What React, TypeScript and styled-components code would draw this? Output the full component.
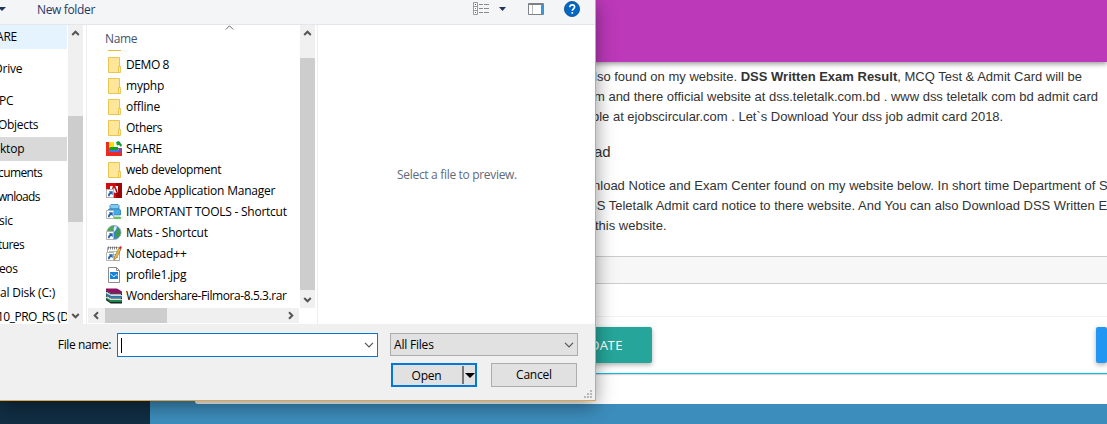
import React from "react";
import styled, { createGlobalStyle } from "styled-components";

const GlobalStyle = createGlobalStyle`
  * { box-sizing: border-box; }
  body { margin: 0; overflow: hidden; background: #3c8dbc; }
`;

const ui = `"Open Sans", "Noto Sans", sans-serif`;

const Page = styled.div`
  position: relative;
  display: flex;
  width: 1107px;
  height: 424px;
  overflow: hidden;
  background: #3c8dbc;
`;
const Sidebar = styled.aside`
  width: 150px;
  background: #112e43;
`;
const Main = styled.main`
  flex: 1;
  min-width: 0;
  padding-left: 45px;
`;
const Card = styled.section`
  display: flex;
  flex-direction: column;
  height: 404px;
  overflow: hidden;
  background: #fff;
  border-bottom-left-radius: 3px;
`;
const PurpleBar = styled.header`
  flex: none;
  height: 62px;
  background: #bc39b9;
  box-shadow: 0 2px 5px rgba(0, 0, 0, 0.4);
`;
const Article = styled.div`
  flex: none;
  height: 194px;
  padding: 5px 0 0 385px;
  font-family: "Liberation Sans", Arial, sans-serif;
  font-size: 13px;
  line-height: 20px;
  color: #333;
`;
const Line = styled.div<{ $shift: number; $spacing?: number }>`
  margin-left: ${(p) => p.$shift}px;
  letter-spacing: ${(p) => p.$spacing ?? 0}px;
  white-space: nowrap;
`;
const Heading = styled.div`
  margin: 14px 0 13px;
  padding-left: 14px;
  font-size: 15px;
  line-height: 22px;
`;
const EditorStatus = styled.div`
  flex: none;
  height: 28px;
  border: solid #ccc;
  border-width: 1px 0;
  background: #f7f7f7;
`;
const Actions = styled.div`
  display: flex;
  justify-content: space-between;
  flex: none;
  height: 58px;
  margin-top: 32px;
  padding: 10px 0 0 350px;
  border-top: 1px solid #f2f2f2;
  border-bottom: 1px solid #00c0ef;
  box-shadow: 0 1px 1px rgba(0, 0, 0, 0.15);
`;
const ActionButton = styled.button<{ $color: string; $width: number; $pad: number }>`
  flex: none;
  width: ${(p) => p.$width}px;
  height: 36px;
  padding: 0 ${(p) => p.$pad}px 0 0;
  border: 0;
  border-radius: 2px;
  background: ${(p) => p.$color};
  box-shadow: 0 2px 5px rgba(0, 0, 0, 0.3);
  color: #fff;
  font: 13px/36px "Noto Sans", sans-serif;
  letter-spacing: 0.5px;
  text-align: right;
`;

const Dialog = styled.div`
  position: absolute;
  left: 0;
  top: 0;
  display: flex;
  flex-direction: column;
  width: 596px;
  height: 401px;
  border: solid #dba64c;
  border-width: 0 1px 1px 0;
  background: #fff;
  box-shadow: 0 5px 18px rgba(0, 0, 0, 0.42);
  font-family: ${ui};
  font-size: 12px;
  color: #000;
`;
const Text = styled.span<{ $s?: number }>`
  letter-spacing: ${(p) => p.$s ?? -0.2}px;
  white-space: nowrap;
`;
const Toolbar = styled.div`
  display: flex;
  flex: none;
  height: 25px;
  padding-right: 15px;
  border-bottom: 1px solid #e3e6ea;
  background: #f4f5f7;
  color: #1e3a66;
  line-height: 19px;
  svg { flex: none; }
`;
const NewFolder = styled.div`
  flex: 1;
  padding-left: 30px;
`;
const Body = styled.div`
  display: flex;
  flex: none;
  height: 299px;
`;
const Nav = styled.div`
  width: 67px;
  margin-right: 1px;
  overflow: hidden;
`;
const NavItem = styled.div<{ $shift: number; $gap?: number; $bg?: string }>`
  height: 24px;
  margin-bottom: ${(p) => p.$gap ?? 0}px;
  text-indent: ${(p) => p.$shift}px;
  line-height: 24px;
  background: ${(p) => p.$bg ?? "transparent"};
`;
const Scroll = styled.div<{ $height: number }>`
  flex: none;
  display: flex;
  flex-direction: column;
  width: 15px;
  height: ${(p) => p.$height}px;
  background: #f0f0f0;
  > :last-child { margin-top: auto; }
`;
const Thumb = styled.div<{ $h: number; $top: number }>`
  height: ${(p) => p.$h}px;
  margin-top: ${(p) => p.$top}px;
  background: #cdcdcd;
`;
const ArrowCell = styled.div<{ $wide?: boolean }>`
  display: flex;
  align-items: center;
  justify-content: center;
  flex: none;
  width: ${(p) => (p.$wide ? 17 : 15)}px;
  height: 17px;
`;
const Files = styled.div`
  display: flex;
  flex-direction: column;
  width: 231px;
  margin-left: 3px;
  padding-left: 1px;
  border-left: 1px solid #eee;
`;
const FilesTop = styled.div`
  display: flex;
  height: 283px;
`;
const FileList = styled.div`
  width: 212px;
  padding-left: 17px;
`;
const ColumnHead = styled.div`
  display: flex;
  height: 24px;
  line-height: 27px;
  color: #44546f;
  svg { margin-left: 88px; }
`;
const Sliver = styled.div`
  width: 13px;
  height: 1px;
  margin: 1px 0 3px 3px;
  background: #e5bd38;
`;
const FileRow = styled.div`
  display: flex;
  align-items: center;
  gap: 4px;
  height: 21px;
  padding-left: 1px;
  svg { flex: none; }
`;
const HScroll = styled.div`
  display: flex;
  align-items: center;
  width: 211px;
  height: 15px;
  background: #f0f0f0;
`;
const HThumb = styled.div`
  width: 62px;
  height: 15px;
  margin-right: 115px;
  background: #cdcdcd;
`;
const Preview = styled.div`
  display: flex;
  align-items: center;
  justify-content: center;
  flex: 1;
  padding-left: 1px;
  border-left: 1px solid #eee;
  color: #616b78;
`;
const Footer = styled.div`
  display: flex;
  flex-direction: column;
  gap: 6px;
  flex: 1;
  padding: 9px 17px 0 0;
  background: #f0f0f0;
`;
const FooterRow = styled.div`
  display: flex;
  justify-content: flex-end;
  align-items: flex-start;
`;
const FileLabel = styled.label`
  margin-right: 6px;
  line-height: 24px;
`;
const FileInput = styled.div`
  display: flex;
  align-items: center;
  justify-content: space-between;
  width: 261px;
  height: 24px;
  margin-right: 12px;
  padding: 0 3px;
  border: 1px solid #0078d7;
  background: #fff;
`;
const Caret = styled.i`
  width: 1px;
  height: 15px;
  background: #000;
`;
const Select = styled.div`
  display: flex;
  align-items: center;
  justify-content: space-between;
  width: 188px;
  height: 23px;
  padding: 0 3px;
  border: 1px solid #adadad;
  background: #e1e1e1;
`;
const OpenButton = styled.div`
  display: flex;
  align-items: center;
  width: 86px;
  height: 24px;
  margin-right: 14px;
  border: 2px solid #0078d7;
  background: #e1e1e1;
  span { flex: 1; padding-right: 2px; text-align: center; }
`;
const Split = styled.div`
  display: flex;
  align-items: center;
  justify-content: flex-end;
  width: 13px;
  height: 18px;
  border-left: 2px solid #777;
`;
const CancelButton = styled.div`
  width: 86px;
  height: 24px;
  margin-right: 1px;
  border: 1px solid #adadad;
  background: #e1e1e1;
  line-height: 22px;
  text-align: center;
`;
const Grip = styled.svg`
  position: absolute;
  right: 3px;
  bottom: 2px;
`;

const rotation = { up: 0, right: 90, down: 180, left: 270 };
const Arrow = ({ dir }: { dir: keyof typeof rotation }) => (
  <ArrowCell $wide={dir === "left" || dir === "right"}>
    <svg width="9" height="9" viewBox="0 0 9 9">
      <path d="M1.2 6 4.5 2.7 7.8 6" fill="none" stroke="#555" strokeWidth="2" transform={`rotate(${rotation[dir]} 4.5 4.5)`} />
    </svg>
  </ArrowCell>
);
const Chevron = () => (
  <svg width="10" height="6" viewBox="0 0 10 6">
    <path d="M1 .8 5 4.8 9 .8" fill="none" stroke="#555" strokeWidth="1.2" />
  </svg>
);

const ShortcutMark = () => (
  <g>
    <path d="M.5 6.5h7v8h-7z" fill="#fff" stroke="#b5b5b5" />
    <path d="M2 13.2c0-2.2.6-3.2 1.8-3.7L2.9 8.3h3.8v3.9l-1.2-1.1c-1.2.3-1.8 1-1.8 2.1z" fill="#2363ae" />
  </g>
);

type Kind = "folder" | "share" | "adobe" | "tools" | "globe" | "notepad" | "image" | "rar";
const FileIcon = ({ kind }: { kind: Kind }) => (
  <svg width="16" height="16" viewBox="0 0 16 16">
    {kind === "folder" && (
      <g>
        <path d="M2.5.5h11v15h-11z" fill="#ffe699" stroke="#eac54f" />
        <path d="M12.5 15.5v-6h2v6z" fill="#ffeaa4" stroke="#e8bd3c" strokeWidth=".8" />
      </g>
    )}
    {kind === "share" && (
      <g>
        <path d="M0 1h3v9h13v5H0z" fill="#ec2b20" />
        <path d="M3 1h5v5H3z" fill="#ffe000" />
        <path d="M4 6h8v4H3V7z" fill="#12a51c" />
        <path d="M3 9h10v2H3z" fill="#3a7ced" />
        <path d="M12 7h4v5h-3z" fill="#8b4b9d" />
        <path d="m10 1 3-1 3 4-1 2-2-2-2 .5z" fill="#1d9b32" />
      </g>
    )}
    {kind === "adobe" && (
      <g>
        <path d="M0 0h16v15H0z" fill="#d20d10" />
        <path d="M10 0h6v15h-6z" fill="#9d0609" />
        <path d="M4 9V3h2.8L5.3 9zM9.4 3H12v7zM8 4.5l2.6 5.5H8.8L8 8.6H6.6z" fill="#fff" />
        <ShortcutMark />
      </g>
    )}
    {kind === "tools" && (
      <g>
        <path d="M4 1.5 5 .5h7l1 1V5H4z" fill="#7fcbf3" stroke="#3487b8" strokeWidth=".8" />
        <path d="M2 6 3.5 5H13l1.5 1v5H2z" fill="#45aaea" stroke="#2d7caf" strokeWidth=".8" />
        <path d="M8 11.5h6V13H8z" fill="#cfd8dc" />
        <path d="M8 13h7v2H8z" fill="#62c65c" />
        <ShortcutMark />
      </g>
    )}
    {kind === "globe" && (
      <g>
        <circle cx="8" cy="7.5" r="7" fill="#3a86bd" stroke="#8fb0c4" />
        <path d="M2 4 5 1.5l3 .3L7 5 4 7H1.5z" fill="#4da950" />
        <path d="m11 2.5 3 2.5.5 4-3 4-2-3 1.3-4z" fill="#3d9b3e" />
        <path d="m8.5 1 2.5.8-1 3L8 7 7.5 4z" fill="#dbeff8" />
        <ShortcutMark />
      </g>
    )}
    {kind === "notepad" && (
      <g>
        <path d="M1.5 1.5h12v13h-12z" fill="#fff" stroke="#aaa" />
        <path d="M2.5.5v3M4.5.5v3M6.5.5v3M8.5.5v3M10.5.5v3" stroke="#666" strokeWidth=".8" />
        <path d="M3 5.5h8M8 8.5h3M8 11.5h4" stroke="#a6c5b0" />
        <path d="m13 2 2 1-4.5 9-2.5 2 .3-3z" fill="#f4bd35" stroke="#85602b" strokeWidth=".6" />
        <path d="m14 0 2 1-1 2.3-2-1z" fill="#cf3535" />
        <ShortcutMark />
      </g>
    )}
    {kind === "image" && (
      <g>
        <path d="M2.5.5h8l3 3v12h-11z" fill="#fff" stroke="#8b8b8b" />
        <path d="M10.5.5v3h3" fill="none" stroke="#8b8b8b" />
        <path d="M4 5h8v7H4z" fill="#1683d8" />
        <path d="m4.5 7 2 1.5L8 10l2-2.5 1.5 1" fill="none" stroke="#fff" strokeWidth=".8" />
      </g>
    )}
    {kind === "rar" && (
      <g>
        <path d="M0 .5h11l5 3v1.7H5L0 2.5z" fill="#8d1263" />
        <path d="M0 2.5 5 5.2h11V7H5L0 4z" fill="#241c20" />
        <path d="m1 4 4 2.2h10v.9H5L1 5z" fill="#f1e6ea" />
        <path d="m0 5 5 2.7h11v2H5L0 7z" fill="#217bb0" />
        <path d="m0 7 5 2.7h11v1.6H5L0 8.6z" fill="#1b2226" />
        <path d="m1 8.3 4 2.2h10v.9H5L1 9.3z" fill="#e8f1f4" />
        <path d="m0 9.5 5 2.6h11v2H5l-5-2.8z" fill="#17894b" />
        <path d="m0 11.5 5 3.3h11" fill="none" stroke="#16251c" strokeWidth="1.4" />
      </g>
    )}
  </svg>
);

const files: { name: string; kind: Kind; s?: number }[] = [
  { name: "DEMO 8", kind: "folder", s: -0.4 },
  { name: "myphp", kind: "folder" },
  { name: "offline", kind: "folder" },
  { name: "Others", kind: "folder", s: -0.35 },
  { name: "SHARE", kind: "share" },
  { name: "web development", kind: "folder", s: -0.35 },
  { name: "Adobe Application Manager", kind: "adobe", s: -0.22 },
  { name: "IMPORTANT TOOLS - Shortcut", kind: "tools", s: -0.24 },
  { name: "Mats - Shortcut", kind: "globe", s: -0.24 },
  { name: "Notepad++", kind: "notepad" },
  { name: "profile1.jpg", kind: "image", s: -0.25 },
  { name: "Wondershare-Filmora-8.5.3.rar", kind: "rar", s: -0.41 },
];

const places: { name: string; shift: number; gap?: number; bg?: string; s?: number }[] = [
  { name: "ARE", shift: -4, gap: 8, bg: "#e5f3ff" },
  { name: "Drive", shift: -6, gap: 8 },
  { name: "PC", shift: -1 },
  { name: "Objects", shift: -2, s: -0.3 },
  { name: "ktop", shift: 0, bg: "#d9d9d9" },
  { name: "cuments", shift: -2, s: -0.6 },
  { name: "wnloads", shift: -2, s: -0.7 },
  { name: "sic", shift: -1 },
  { name: "tures", shift: -2, s: -0.6 },
  { name: "eos", shift: -1, s: -0.4 },
  { name: "al Disk (C:)", shift: 0 },
  { name: "10_PRO_RS (D:)", shift: -3, s: -0.5 },
];

const ToolbarIcons = () => (
  <svg width="110" height="24" viewBox="0 0 110 24">
    <path d="M3.5 2.5h4v12h-4zM3.5 6.5h4M3.5 10.5h4" fill="#fff" stroke="#999" />
    <path d="M9 4.5h4M14 4.5h5M9 8.5h4M14 8.5h5M9 12.5h4M14 12.5h5" stroke="#8a8a8a" />
    <path d="M5 4h1v1H5z" fill="#555" />
    <path d="M5 8h1v1H5z" fill="#2d8ded" />
    <path d="M5 12h1v1H5z" fill="#d33" />
    <path d="M29 7h7l-3.5 4z" fill="#1f355e" />
    <path d="M58.5 3.5h15v11h-15z" fill="#fff" stroke="#7d8186" />
    <path d="M58 4.5h16" stroke="#7d8186" />
    <path d="M62.5 5v9" stroke="#bbb" />
    <path d="M71 5h2v9h-2z" fill="#3697e1" />
    <circle cx="102" cy="9" r="7.6" fill="#0067c5" stroke="#174e84" strokeWidth=".8" />
    <path d="M99.8 7.3c0-3.4 4.8-3 4.8-.3 0 1.8-2.3 1.8-2.3 3.8M102.3 12v1.7" fill="none" stroke="#fff" strokeWidth="1.6" />
  </svg>
);

export default function App() {
  return (
    <Page>
      <GlobalStyle />
      <Sidebar />
      <Main>
        <Card>
          <PurpleBar />
          <Article>
            <Line $shift={14}>lso found on my website. <b>DSS Written Exam Result</b>, MCQ Test &amp; Admit Card will be</Line>
            <Line $shift={14} $spacing={-0.01}>m and there official website at dss.teletalk.com.bd . www dss teletalk com bd admit card</Line>
            <Line $shift={12} $spacing={-0.01}>ble at ejobscircular.com . Let`s Download Your dss job admit card 2018.</Line>
            <Heading>ad</Heading>
            <Line $shift={13} $spacing={0.01}>nload Notice and Exam Center found on my website below. In short time Department of Social</Line>
            <Line $shift={8}>SS Teletalk Admit card notice to there website. And You can also Download DSS Written Exam</Line>
            <Line $shift={15}>this website.</Line>
          </Article>
          <EditorStatus />
          <Actions>
            <ActionButton $color="#26a69a" $width={107} $pad={29}>UPDATE</ActionButton>
            <ActionButton $color="#2196f3" $width={11} $pad={0} />
          </Actions>
        </Card>
      </Main>

      <Dialog>
        <Toolbar>
          <svg width="7" height="24"><path d="M-2 7h8L2 11z" fill="#1f355e" /></svg>
          <NewFolder><Text $s={-0.35}>New folder</Text></NewFolder>
          <ToolbarIcons />
        </Toolbar>
        <Body>
          <Nav>
            {places.map((p) => (
              <NavItem key={p.name} $shift={p.shift} $gap={p.gap} $bg={p.bg}><Text $s={p.s}>{p.name}</Text></NavItem>
            ))}
          </Nav>
          <Scroll $height={299}>
            <Arrow dir="up" />
            <Thumb $h={106} $top={74} />
            <Arrow dir="down" />
          </Scroll>
          <Files>
            <FilesTop>
              <FileList>
                <ColumnHead>
                  <Text $s={-0.35}>Name</Text>
                  <svg width="9" height="6"><path d="M.8 4.5 4.5.8 8.2 4.5" fill="none" stroke="#666" /></svg>
                </ColumnHead>
                <Sliver />
                {files.map((f) => (
                  <FileRow key={f.name}><FileIcon kind={f.kind} /><Text $s={f.s}>{f.name}</Text></FileRow>
                ))}
              </FileList>
              <Scroll $height={283}>
                <Arrow dir="up" />
                <Thumb $h={232} $top={16} />
                <Arrow dir="down" />
              </Scroll>
            </FilesTop>
            <HScroll>
              <Arrow dir="left" />
              <HThumb />
              <Arrow dir="right" />
            </HScroll>
          </Files>
          <Preview><Text $s={-0.32}>Select a file to preview.</Text></Preview>
        </Body>
        <Footer>
          <FooterRow>
            <FileLabel><Text $s={-0.4}>File name:</Text></FileLabel>
            <FileInput><Caret /><Chevron /></FileInput>
            <Select><Text>All Files</Text><Chevron /></Select>
          </FooterRow>
          <FooterRow>
            <OpenButton>
              <Text>Open</Text>
              <Split><svg width="10" height="5"><path d="M0 0h10L5 5z" fill="#000" /></svg></Split>
            </OpenButton>
            <CancelButton><Text>Cancel</Text></CancelButton>
          </FooterRow>
        </Footer>
        <Grip width="8" height="8" fill="#b8b8b8">
          <path d="M6 0h2v2H6zM3 3h2v2H3zM6 3h2v2H6zM0 6h2v2H0zM3 6h2v2H3zM6 6h2v2H6z" />
        </Grip>
      </Dialog>
    </Page>
  );
}
